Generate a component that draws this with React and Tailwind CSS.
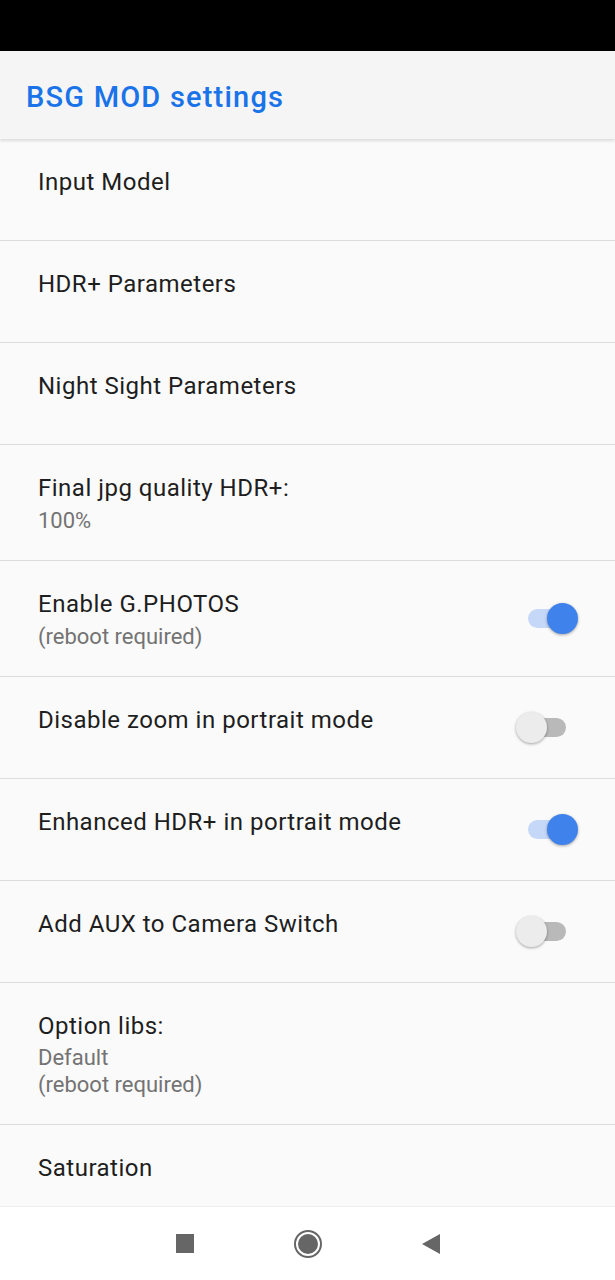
import React from 'react';

const rows = [
    { title: 'Input Model' },
    { title: 'HDR+ Parameters' },
    { title: 'Night Sight Parameters' },
    { title: 'Final jpg quality HDR+:', summary: ['100%'] },
    { title: 'Enable G.PHOTOS', summary: ['(reboot required)'], toggle: true },
    { title: 'Disable zoom in portrait mode', toggle: false },
    { title: 'Enhanced HDR+ in portrait mode', toggle: true },
    { title: 'Add AUX to Camera Switch', toggle: false },
    { title: 'Option libs:', summary: ['Default', '(reboot required)'] },
    { title: 'Saturation' },
];

function Toggle({ on }) {
    return (
        <div className="relative w-[62px] h-[31px] shrink-0">
            <div className={`absolute left-[12px] top-[6px] w-[38px] h-[19px] rounded-full ${on ? 'bg-[#c6d8f8]' : 'bg-[#b9b9b9]'}`} />
            <div
                className={`absolute top-0 w-[31px] h-[31px] rounded-full shadow-[0_1px_3px_rgba(0,0,0,0.35)] ${on ? 'left-[31px] bg-[#3f82ec]' : 'left-0 bg-[#ececec]'}`}
            />
        </div>
    );
}

function Row({ title, summary, toggle }) {
    const hasToggle = toggle !== undefined;
    const multi = summary && summary.length > 1;
    return (
        <div className="flex items-center border-b border-[#dcdcdc] pl-[38px] pr-[37px]">
            <div className={`flex-1 pt-[28px] ${summary ? 'pb-[26px]' : 'pb-[43px]'}`}>
                <div className="text-[24px] leading-[30px] tracking-[0.5px] text-[#1e1e1e]">{title}</div>
                {summary && (
                    <div className={`${multi ? 'mt-[3px]' : 'mt-[4px]'} text-[22px] leading-[27px] text-[#737373]`}>
                        {summary.map((s) => (
                            <div key={s}>{s}</div>
                        ))}
                    </div>
                )}
            </div>
            {hasToggle && <Toggle on={toggle} />}
        </div>
    );
}

export default function App() {
    return (
        <div className="flex flex-col h-[1280px] w-[615px] overflow-hidden bg-[#fafafa] font-['Roboto',sans-serif]">
            {/* status bar */}
            <div className="h-[51px] bg-black shrink-0" />

            {/* toolbar */}
            <div className="relative z-10 h-[88px] shrink-0 flex items-center pt-[4px] px-[26px] bg-[#f5f5f5] shadow-[0_2px_3px_rgba(0,0,0,0.12)]">
                <h1 className="text-[29px] font-medium tracking-[1.2px] text-[#1a73e8] leading-none">BSG MOD settings</h1>
            </div>

            {/* list */}
            <div className="flex-1 overflow-hidden">
                {rows.map((r) => (
                    <Row key={r.title} {...r} />
                ))}
            </div>

            {/* nav bar */}
            <div className="h-[74px] shrink-0 bg-white border-t border-[#eeeeee] flex items-center justify-center gap-[100px]">
                <div className="w-[18px] h-[19px] bg-[#666666]" />
                <svg width="28" height="28" viewBox="0 0 28 28">
                    <circle cx="14" cy="14" r="13" fill="none" stroke="#666666" strokeWidth="2" />
                    <circle cx="14" cy="14" r="10" fill="#666666" />
                </svg>
                <svg width="18" height="20" viewBox="0 0 18 20">
                    <path d="M18 0 L18 20 L0 10 Z" fill="#666666" />
                </svg>
            </div>
        </div>
    );
}
